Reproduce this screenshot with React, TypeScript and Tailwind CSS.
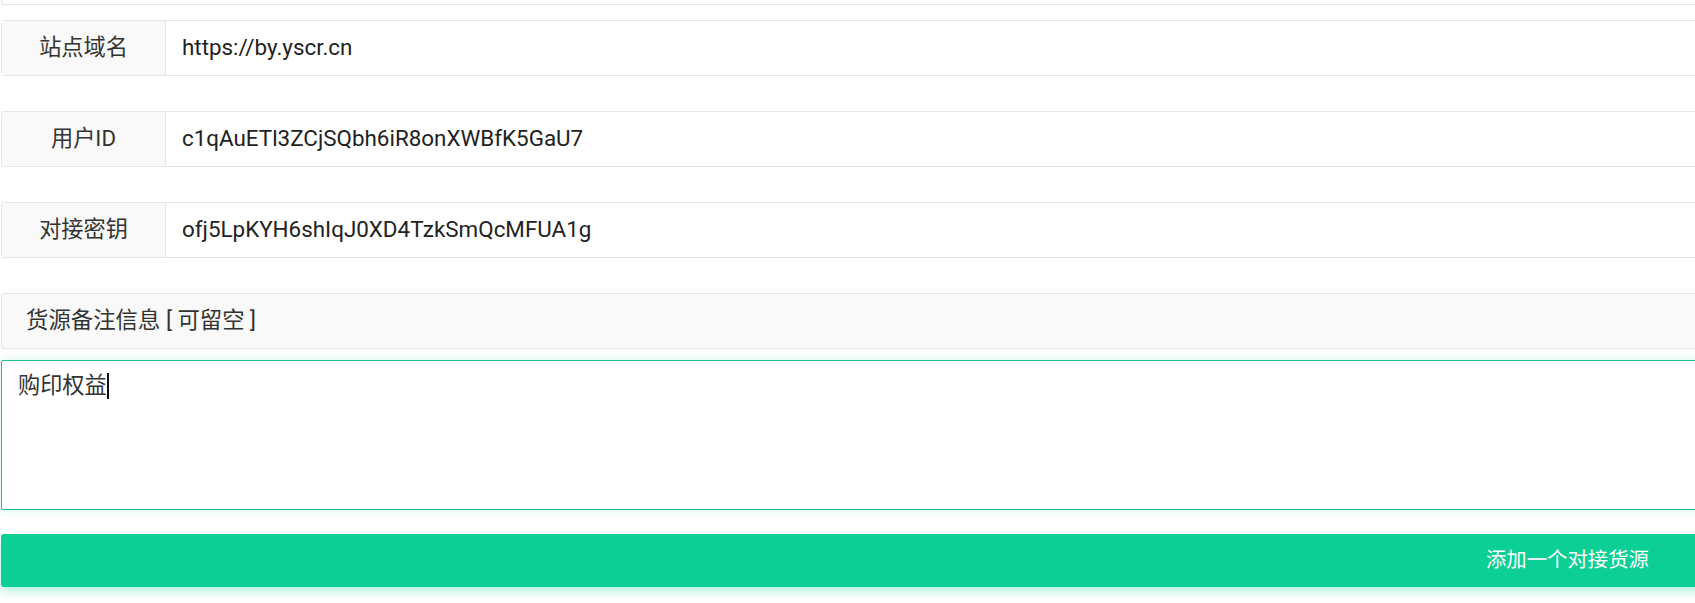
const rows = [
  { label: "站点域名", value: "https://by.yscr.cn" },
  { label: "用户ID", value: "c1qAuETl3ZCjSQbh6iR8onXWBfK5GaU7" },
  { label: "对接密钥", value: "ofj5LpKYH6shIqJ0XD4TzkSmQcMFUA1g" },
];

const font = { fontFamily: "Roboto, 'Noto Sans CJK SC', sans-serif" };

function FieldRow({ label, value }: { label: string; value: string }) {
  return (
    <div className="flex h-[56px] border border-[#e5e5e5] rounded-[3px] overflow-hidden">
      <div className="w-[164px] shrink-0 bg-[#f9f9f9] border-r border-[#e5e5e5] flex items-center justify-center text-[22.2px] text-[#333]">
        {label}
      </div>
      <div className="flex-1 bg-white flex items-center pl-[16px] text-[22.4px] text-[#222]">
        {value}
      </div>
    </div>
  );
}

export default function App() {
  return (
    <div className="w-full h-[603px] overflow-hidden bg-white" style={font}>
      <div className="w-[1720px] pl-[1px]">
        <div className="h-[5px] border-x border-b border-[#e5e5e5] rounded-b-[3px]" />
        <div className="mt-[15px] flex flex-col gap-[35px]">
          {rows.map((r) => (
            <FieldRow key={r.label} label={r.label} value={r.value} />
          ))}
          <div className="h-[56px] border border-[#e5e5e5] rounded-[3px] bg-[#f9f9f9] flex items-center pl-[24px] text-[22.4px] text-[#333]">
            货源备注信息 [ 可留空 ]
          </div>
        </div>
        <div className="mt-[11px] h-[150px] border border-[#1fbf85] rounded-[2px] bg-white px-[16px] pt-[9px] text-[22.2px] leading-[30px] text-[#333] shadow-[0_0_10px_rgba(12,207,149,0.18)]">
          购印权益<span className="inline-block w-[2px] h-[26px] bg-[#111] align-[-6px]" />
        </div>
        <button className="mt-[24px] w-full h-[53px] rounded-[3px] bg-[#0ccf95] text-white text-[20.4px] flex items-center justify-end pr-[71px] shadow-[0_5px_10px_rgba(12,207,149,0.3)]">
          添加一个对接货源
        </button>
      </div>
    </div>
  );
}
